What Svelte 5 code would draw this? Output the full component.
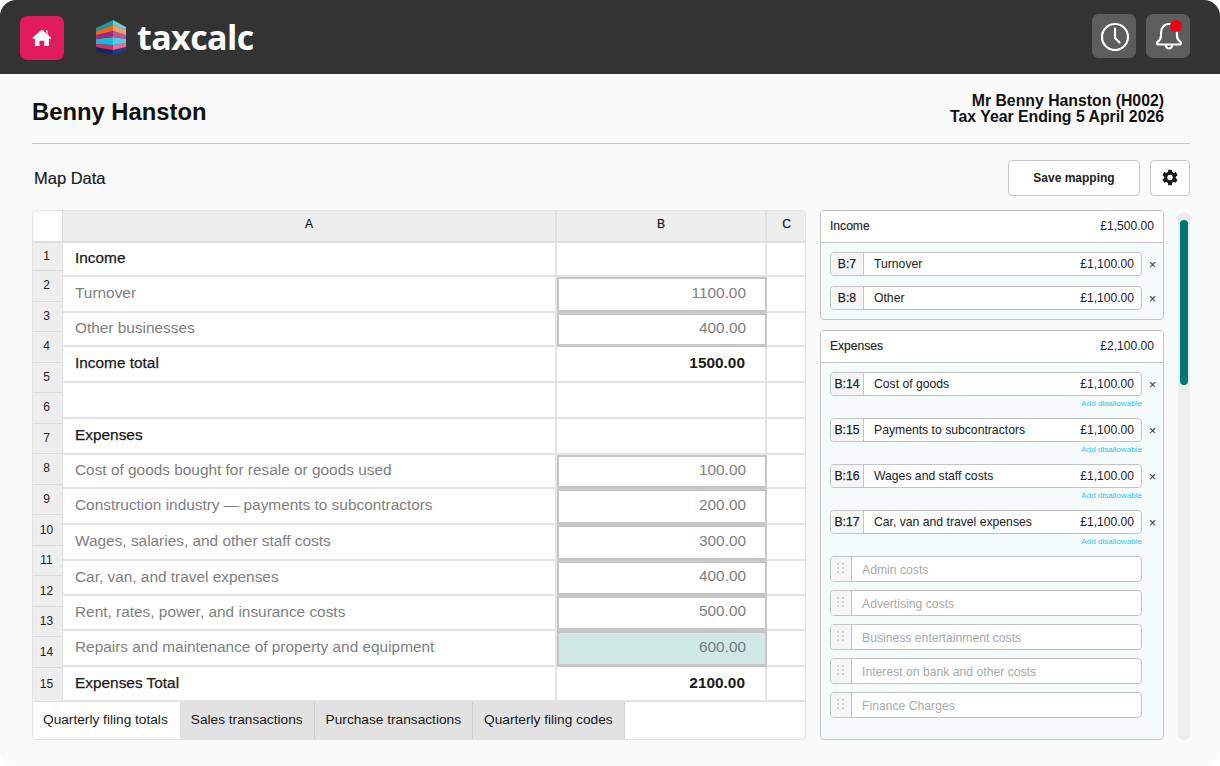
<script>
  const rows = [
    { label: "Income", strong: true },
    { label: "Turnover", value: "1100.00", picked: true },
    { label: "Other businesses", value: "400.00", picked: true },
    { label: "Income total", value: "1500.00", strong: true },
    { label: "" },
    { label: "Expenses", strong: true },
    { label: "Cost of goods bought for resale or goods used", value: "100.00", picked: true },
    { label: "Construction industry — payments to subcontractors", value: "200.00", picked: true },
    { label: "Wages, salaries, and other staff costs", value: "300.00", picked: true },
    { label: "Car, van, and travel expenses", value: "400.00", picked: true },
    { label: "Rent, rates, power, and insurance costs", value: "500.00", picked: true },
    { label: "Repairs and maintenance of property and equipment", value: "600.00", picked: true, active: true },
    { label: "Expenses Total", value: "2100.00", strong: true }
  ];

  const numbers = Array.from({ length: 15 }, (_, i) => i + 1);

  const tabs = ["Quarterly filing totals", "Sales transactions", "Purchase transactions", "Quarterly filing codes"];

  const incomeItems = [
    { cell: "B:7", name: "Turnover" },
    { cell: "B:8", name: "Other" }
  ];

  const expenseItems = [
    { cell: "B:14", name: "Cost of goods" },
    { cell: "B:15", name: "Payments to subcontractors" },
    { cell: "B:16", name: "Wages and staff costs" },
    { cell: "B:17", name: "Car, van and travel expenses" }
  ];

  const unmapped = ["Admin costs", "Advertising costs", "Business entertainment costs", "Interest on bank and other costs", "Finance Charges"];
</script>

<div class="window">
  <header>
    <button class="home" aria-label="Home">
      <svg width="20" height="20" viewBox="0 0 20 20"><path d="M13.500 2.500h2.300v3.800zM10 1.600 0.800 9.600c-.5.500-.2 1.200.5 1.200h1.600v6.200c0 .5.400.9.900.9h3.700v-5.200h4.800v5.200h3.700c.5 0 .9-.4.900-.9v-6.200h1.600c.7 0 1-.7.500-1.200z" fill="#fff"/></svg>
    </button>
    <div class="logo">
      <svg width="30" height="35" viewBox="0 0 30 35">
        <polygon points="0,27 17,30 17,35 0,31" fill="#16285c"/>
        <polygon points="17,30 30,27 30,31 17,35" fill="#223a78"/>
        <polygon points="0,24 17,25 17,30 0,27" fill="#dd2a68"/>
        <polygon points="17,25 30,23 30,27 17,30" fill="#f06aa6"/>
        <polygon points="0,19 17,17 17,25 0,24" fill="#1fb7d6"/>
        <polygon points="17,17 30,19 30,23 17,25" fill="#56cde2"/>
        <polygon points="0,15 17,11 17,17 0,19" fill="#9c2a82"/>
        <polygon points="17,11 30,15 30,19 17,17" fill="#bb55a2"/>
        <polygon points="0,11 17,5 17,11 0,15" fill="#ee6424"/>
        <polygon points="17,5 30,10 30,15 17,11" fill="#f5a071"/>
        <polygon points="0,8 17,0 17,5 0,11" fill="#169c9c"/>
        <polygon points="17,0 30,7 30,10 17,5" fill="#6fcfcb"/>
      </svg>
      <span>taxcalc</span>
    </div>
    <div class="spacer"></div>
    <button class="tool" aria-label="History">
      <svg width="30" height="30" viewBox="0 0 30 30" fill="none" stroke="#fff" stroke-width="2.200" stroke-linecap="round" stroke-linejoin="round"><circle cx="16" cy="16" r="13"/><path d="M16 7.500v9.500l4.500 4.500"/></svg>
    </button>
    <button class="tool" aria-label="Notifications">
      <svg width="30" height="30" viewBox="0 0 30 30" fill="none" stroke="#fff" stroke-width="2.200" stroke-linejoin="round"><path d="M16 3C10.500 3 8 7.500 8 12v3c0 3-1.500 4.500-3.500 6-1 1-.5 2.500 1 2.500h21c1.500 0 2-1.500 1-2.500-2-1.500-3.500-3-3.500-6v-3c0-4.500-2.500-9-8-9z"/><path d="M12.800 23.500c.2 3 1.700 4 3.200 4s3-1 3.200-4"/></svg>
      <span class="dot"></span>
    </button>
  </header>

  <main>
    <div class="title-row">
      <h1>Benny Hanston</h1>
      <div class="client">Mr Benny Hanston (H002)<br />Tax Year Ending 5 April 2026</div>
    </div>

    <div class="action-row">
      <h2>Map Data</h2>
      <div class="spacer"></div>
      <button class="save">Save mapping</button>
      <button class="cog" aria-label="Settings">
        <svg width="18" height="18" viewBox="0 0 24 24"><path fill="#1a1a1a" fill-rule="evenodd" d="M14.400 1h-4.800l-.5 3.100c-.7.300-1.300.600-1.900 1.100L4.300 4.100 1.900 8.200l2.400 2c-.1.700-.1 1.400 0 2.100l-2.400 2 2.400 4.100 2.900-1.100c.6.500 1.200.8 1.900 1.100l.5 3.100h4.800l.5-3.100c.7-.3 1.300-.6 1.900-1.100l2.900 1.100 2.400-4.100-2.400-2c.1-.7.100-1.400 0-2.100l2.400-2-2.400-4.100-2.900 1.100c-.6-.5-1.200-.8-1.900-1.100zM12 7.700a3.600 3.600 0 1 1 0 7.200 3.600 3.600 0 0 1 0-7.200z"/></svg>
      </button>
    </div>

    <div class="workspace">
      <section class="sheet">
        <div class="sheet-body">
          <div class="numbers">
            <div class="corner"></div>
            <div class="number-list">
              {#each numbers as n}
                <div class="num">{n}</div>
              {/each}
            </div>
          </div>
          <div class="grid">
            <div class="col-head">A</div>
            <div class="col-head">B</div>
            <div class="col-head last">C</div>
            {#each rows as row}
              <div class="cell label" class:strong={row.strong}>{row.label}</div>
              <div class="cell value" class:strong={row.strong} class:picked={row.picked} class:active={row.active}>{row.value ?? ""}</div>
              <div class="cell last"></div>
            {/each}
          </div>
        </div>
        <div class="tabs">
          {#each tabs as tab, i}
            <div class="tab" class:current={i === 0}>{tab}</div>
          {/each}
        </div>
      </section>

      <aside class="mapping">
        <section class="card income">
          <div class="card-head"><span class="head-name">Income</span><span>£1,500.00</span></div>
          <div class="card-body">
            {#each incomeItems as item}
              <div class="line">
                <div class="item">
                  <span class="ref">{item.cell}</span>
                  <span class="name">{item.name}</span>
                  <span class="amount">£1,100.00</span>
                </div>
                <span class="remove">×</span>
              </div>
            {/each}
          </div>
        </section>

        <section class="card expenses">
          <div class="card-head"><span class="head-name">Expenses</span><span>£2,100.00</span></div>
          <div class="card-body tight">
            {#each expenseItems as item}
              <div class="line">
                <div class="item">
                  <span class="ref">{item.cell}</span>
                  <span class="name">{item.name}</span>
                  <span class="amount">£1,100.00</span>
                </div>
                <span class="remove">×</span>
              </div>
              <div class="add">Add disallowable</div>
            {/each}
            <div class="free-list">
              {#each unmapped as name}
                <div class="item free">
                  <span class="grip">
                    <svg width="8" height="12" viewBox="0 0 8 12" fill="#d4d4d4">
                      <rect x="0" y="0" width="2" height="2"/><rect x="5" y="0" width="2" height="2"/>
                      <rect x="0" y="4" width="2" height="2"/><rect x="5" y="4" width="2" height="2"/>
                      <rect x="0" y="8" width="2" height="2"/><rect x="5" y="8" width="2" height="2"/>
                    </svg>
                  </span>
                  <span class="name">{name}</span>
                </div>
              {/each}
            </div>
          </div>
        </section>
      </aside>

      <div class="scrollbar"><div class="thumb"></div></div>
    </div>
  </main>
</div>

<style>
  :global(body) {
    margin: 0;
    background: #fff;
  }

  .window {
    width: 1220px;
    height: 766px;
    background: #fafafa;
    border-radius: 16px;
    overflow: hidden;
    font-family: "Liberation Sans", Arial, sans-serif;
    color: #1a1a1a;
    display: flex;
    flex-direction: column;
  }

  button {
    font-family: inherit;
    cursor: pointer;
    padding: 0;
    border: none;
  }

  .spacer {
    flex: 1;
  }

  header {
    height: 74px;
    flex: none;
    box-sizing: border-box;
    background: #333333;
    display: flex;
    align-items: center;
    padding: 0 30px 2px 20px;
  }

  .home {
    width: 44px;
    height: 44px;
    margin-top: 4px;
    border-radius: 7px;
    background: #e01b5e;
    display: flex;
    align-items: center;
    justify-content: center;
  }

  .logo {
    margin-left: 32px;
    margin-top: 2px;
    display: flex;
    align-items: center;
    gap: 11px;
    color: #fff;
  }

  .logo span {
    font-family: "Open Sans", sans-serif;
    font-weight: 700;
    font-size: 34px;
    line-height: 40px;
    letter-spacing: -0.6px;
  }

  .tool {
    position: relative;
    width: 44px;
    height: 44px;
    margin-left: 10px;
    border-radius: 7px;
    background: #5d5d5d;
    display: flex;
    align-items: center;
    justify-content: center;
  }

  .dot {
    position: absolute;
    top: 6px;
    right: 8px;
    width: 12px;
    height: 12px;
    border-radius: 50%;
    background: #ee0011;
  }

  main {
    flex: 1;
    padding: 0 30px 26px 32px;
    display: flex;
    flex-direction: column;
    min-height: 0;
  }

  .title-row {
    height: 70px;
    flex: none;
    box-sizing: border-box;
    border-bottom: 1px solid #c9c9c9;
    display: flex;
    justify-content: space-between;
    padding: 18px 26px 0 0;
  }

  h1 {
    margin: 6px 0 0;
    font-size: 23.800px;
    line-height: 28px;
    font-weight: 700;
    color: #111;
  }

  .client {
    font-size: 15.800px;
    line-height: 16px;
    font-weight: 700;
    text-align: right;
    margin-top: 1px;
    color: #111;
  }

  .action-row {
    height: 36px;
    flex: none;
    margin-top: 16px;
    display: flex;
    align-items: center;
    gap: 10px;
  }

  h2 {
    margin: 0 0 0 2px;
    font-size: 16.500px;
    font-weight: 400;
    -webkit-text-stroke: 0.2px #1a1a1a;
  }

  .save, .cog {
    height: 36px;
    background: #fff;
    border: 1px solid #c8c8c8;
    border-radius: 4px;
  }

  .save {
    width: 132px;
    font-size: 12px;
    font-weight: 700;
    color: #222;
  }

  .cog {
    width: 40px;
    display: flex;
    align-items: center;
    justify-content: center;
  }

  .workspace {
    flex: 1;
    min-height: 0;
    margin-top: 14px;
    display: flex;
  }

  .sheet {
    width: 774px;
    flex: none;
    box-sizing: border-box;
    background: #fff;
    border: 1px solid #e2e2e2;
    border-radius: 4px;
    overflow: hidden;
    display: flex;
    flex-direction: column;
  }

  .sheet-body {
    display: flex;
    height: 491px;
    flex: none;
  }

  .numbers {
    width: 30px;
    flex: none;
    display: flex;
    flex-direction: column;
  }

  .corner {
    height: 32px;
    flex: none;
    border-right: 1px solid #e2e2e2;
    border-bottom: 2px solid #dedede;
    box-sizing: border-box;
  }

  .number-list {
    flex: 1;
    display: grid;
    grid-template-rows: 28px repeat(13, 1fr) 34px;
    background: #eeeeee;
  }

  .num {
    display: flex;
    justify-content: center;
    align-items: center;
    padding-right: 2px;
    padding-bottom: 1px;
    font-size: 12px;
    color: #222;
    border-bottom: 1px solid #dcdcdc;
    border-right: 1px solid #e2e2e2;
  }

  .grid {
    flex: 1;
    display: grid;
    grid-template-columns: 494px 210px 39px;
    grid-template-rows: 32px 34px 36px 34px 36px 36px 36px 34px 36px 36px 35px 35px 36px 35px;
  }

  .col-head {
    box-sizing: border-box;
    background: #eeeeee;
    border-right: 2px solid #e0e0e0;
    border-bottom: 2px solid #dedede;
    display: flex;
    align-items: center;
    justify-content: center;
    font-size: 12px;
    color: #111;
    -webkit-text-stroke: 0.2px #111;
    padding-bottom: 4px;
  }

  .cell {
    box-sizing: border-box;
    border-right: 2px solid #e4e4e4;
    border-bottom: 2px solid #e4e4e4;
    display: flex;
    align-items: center;
    font-size: 15.400px;
    color: #808080;
    padding: 0 0 2px 12px;
  }

  .last {
    border-right: none;
  }

  .value {
    justify-content: flex-end;
    padding: 0 20px 2px 0;
  }

  .strong {
    color: #1a1a1a;
  }

  .label.strong {
    -webkit-text-stroke: 0.25px #1a1a1a;
  }

  .value.strong {
    font-weight: 700;
  }

  .picked {
    border: 2px solid #c6c6c6;
    border-bottom-width: 3px;
    padding: 0 19px 4px 0;
  }

  .active {
    background: #d0e9e6;
    color: #6e7f7d;
  }

  .tabs {
    flex: 1;
    display: flex;
    border-top: 1px solid #e2e2e2;
    margin-top: -1px;
    position: relative;
  }

  .tab {
    background: #e2e2e2;
    border-right: 1px solid #d0d0d0;
    display: flex;
    align-items: center;
    padding: 0 11px 3px 11px;
    font-size: 13.700px;
    color: #1a1a1a;
  }

  .tab.current {
    background: #fff;
    border-right: none;
    padding: 0 12px 3px 10px;
  }

  .mapping {
    width: 344px;
    flex: none;
    margin-left: 14px;
    display: flex;
    flex-direction: column;
    gap: 10px;
  }

  .card {
    box-sizing: border-box;
    border: 1px solid #c4c4c4;
    border-radius: 4px;
    background: #f5fbfb;
    overflow: hidden;
  }

  .income {
    height: 110px;
    flex: none;
  }

  .expenses {
    flex: 1;
  }

  .card-head {
    height: 32px;
    box-sizing: border-box;
    background: #fff;
    border-bottom: 1px solid #c4c4c4;
    display: flex;
    align-items: center;
    justify-content: space-between;
    padding: 0 9px 2px;
    font-size: 12.100px;
    color: #222;
  }

  .head-name {
    -webkit-text-stroke: 0.15px #222;
  }

  .card-body {
    padding: 9px 0 0 9px;
    display: flex;
    flex-direction: column;
    gap: 10px;
  }

  .card-body.tight {
    gap: 0;
  }

  .line {
    display: flex;
    align-items: center;
  }

  .item {
    box-sizing: border-box;
    width: 312px;
    height: 24px;
    flex: none;
    background: #fff;
    border: 1px solid #c4c4c4;
    border-radius: 4px;
    overflow: hidden;
    display: flex;
    align-items: center;
    font-size: 12.200px;
    color: #222;
  }

  .ref {
    width: 32px;
    height: 100%;
    flex: none;
    display: flex;
    align-items: center;
    justify-content: center;
    background: #f5f5f5;
    border-right: 1px solid #c4c4c4;
    -webkit-text-stroke: 0.25px #222;
  }

  .name {
    padding-left: 10px;
  }

  .amount {
    margin-left: auto;
    padding-right: 7px;
    font-size: 12.100px;
  }

  .remove {
    width: 21px;
    flex: none;
    text-align: center;
    font-size: 13px;
    color: #333;
  }

  .add {
    width: 312px;
    height: 22px;
    box-sizing: border-box;
    padding-top: 3px;
    text-align: right;
    font-size: 8.100px;
    line-height: 9px;
    color: #2fc6ea;
  }

  .free-list {
    display: flex;
    flex-direction: column;
    gap: 8px;
  }

  .free {
    height: 26px;
    color: #a9a9a9;
  }

  .free .name {
    padding-top: 2px;
  }

  .grip {
    width: 20px;
    height: 100%;
    flex: none;
    background: #f5f5f5;
    border-right: 1px solid #c4c4c4;
    display: flex;
    align-items: center;
    justify-content: center;
  }

  .scrollbar {
    width: 12px;
    flex: none;
    margin: 2px 0 0 14px;
    background: #eeeeee;
    border-radius: 6px;
    padding-top: 8px;
    box-sizing: border-box;
    display: flex;
    justify-content: center;
  }

  .thumb {
    width: 8px;
    height: 165px;
    border-radius: 4px;
    background: #00786f;
  }
</style>
